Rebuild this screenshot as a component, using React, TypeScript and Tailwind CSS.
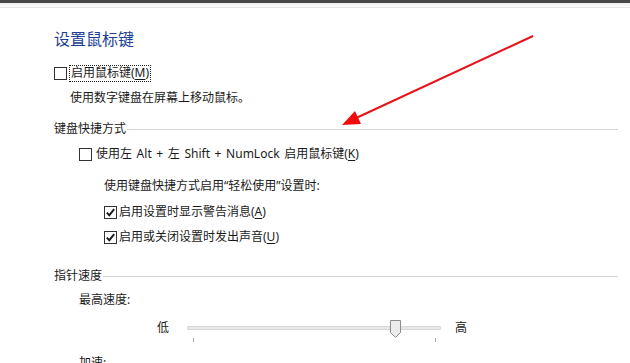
import React from 'react';

const font = { fontFamily: '"Noto Sans", "Noto Sans CJK SC", sans-serif' };

function Box({ checked = false }: { checked?: boolean }) {
    return (
        <span className="w-[13px] h-[13px] border border-[#333333] bg-white flex items-center justify-center shrink-0">
            {checked && (
                <svg width="11" height="11" viewBox="0 0 11 11">
                    <path d="M1.8 5.6 L4.3 8.2 L9.2 2.2" fill="none" stroke="#1a1a1a" strokeWidth="1.9" />
                </svg>
            )}
        </span>
    );
}

function Key({ k }: { k: string }) {
    return <span className="underline underline-offset-2">{k}</span>;
}

function Heading({ text }: { text: string }) {
    return (
        <div className="h-[20px] flex items-center pr-[12px]">
            <span className="text-[12px] text-[#1a1a1a] leading-[20px]">{text}</span>
            <div className="flex-1 h-px bg-[#d4d4d4] ml-[1px]" />
        </div>
    );
}

export default function App() {
    return (
        <div className="w-[630px] h-[363px] overflow-hidden bg-white relative text-[#1a1a1a]" style={font}>
            <div className="h-[3px] bg-[#474747]" />
            <div className="h-[5px] bg-gradient-to-b from-[#efefef] to-[#fbfbfb] border-b border-[#e6e6e6]" />

            <div className="pl-[54px]">
                <div className="mt-[19px] h-[24px] flex items-center text-[16px] text-[#1e3f94] leading-[24px]">
                    设置鼠标键
                </div>

                <div className="mt-[12px] h-[20px] flex items-center">
                    <Box />
                    <span className="ml-[2px] px-[1px] h-[17px] flex items-center border border-dotted border-[#222] text-[12px] leading-[16px]">
                        启用鼠标键(<Key k="M" />)
                    </span>
                </div>

                <div className="mt-[5px] h-[20px] flex items-center pl-[16px] text-[12px]">
                    使用数字键盘在屏幕上移动鼠标。
                </div>

                <div className="mt-[11px]">
                    <Heading text="键盘快捷方式" />
                </div>

                <div className="mt-[5px] h-[20px] flex items-center pl-[25px] gap-[4px] text-[12px]">
                    <Box />
                    <span className="[word-spacing:1.5px]">使用左 Alt + 左 Shift + NumLock 启用鼠标键(<Key k="K" />)</span>
                </div>

                <div className="mt-[12px] h-[20px] flex items-center pl-[50px] text-[12px]">
                    使用键盘快捷方式启用“轻松使用”设置时:
                </div>

                <div className="mt-[6px] h-[20px] flex items-center pl-[50px] gap-[2px] text-[12px]">
                    <Box checked />
                    <span>启用设置时显示警告消息(<Key k="A" />)</span>
                </div>

                <div className="mt-[5px] h-[20px] flex items-center pl-[50px] gap-[2px] text-[12px]">
                    <Box checked />
                    <span>启用或关闭设置时发出声音(<Key k="U" />)</span>
                </div>

                <div className="mt-[19px]">
                    <Heading text="指针速度" />
                </div>

                <div className="mt-[4px] h-[20px] flex items-center pl-[25px] text-[12px]">
                    最高速度:
                </div>

                <div className="mt-[6px] h-[24px] flex items-center pl-[103px] text-[12px]">
                    <span className="w-[13px]">低</span>
                    <div className="relative ml-[17px] w-[254px] h-[24px] flex items-center">
                        <div className="w-full h-[4px] bg-[#e6e6e6] border border-[#d9d9d9] rounded-[1px]" />
                        <svg className="absolute left-[203px] top-[4px]" width="11" height="18" viewBox="0 0 11 18">
                            <path d="M0.5 0.5 H10.5 V12.5 L5.5 17.5 L0.5 12.5 Z" fill="#ececec" stroke="#8c8c8c" />
                        </svg>
                        <div className="absolute left-[6px] top-[22px] w-px h-[4px] bg-[#a8a8a8]" />
                        <div className="absolute left-[248px] top-[22px] w-px h-[4px] bg-[#a8a8a8]" />
                    </div>
                    <span className="ml-[14px]">高</span>
                </div>

                <div className="mt-[13px] h-[20px] flex items-center pl-[25px] text-[12px]">
                    加速:
                </div>
            </div>

            <svg className="absolute left-0 top-0 pointer-events-none" width="630" height="363">
                <line x1="533" y1="36" x2="354" y2="119" stroke="#e8131a" strokeWidth="2" />
                <polygon points="342,125 361,124 355,111" fill="#f00c0c" />
            </svg>
        </div>
    );
}
